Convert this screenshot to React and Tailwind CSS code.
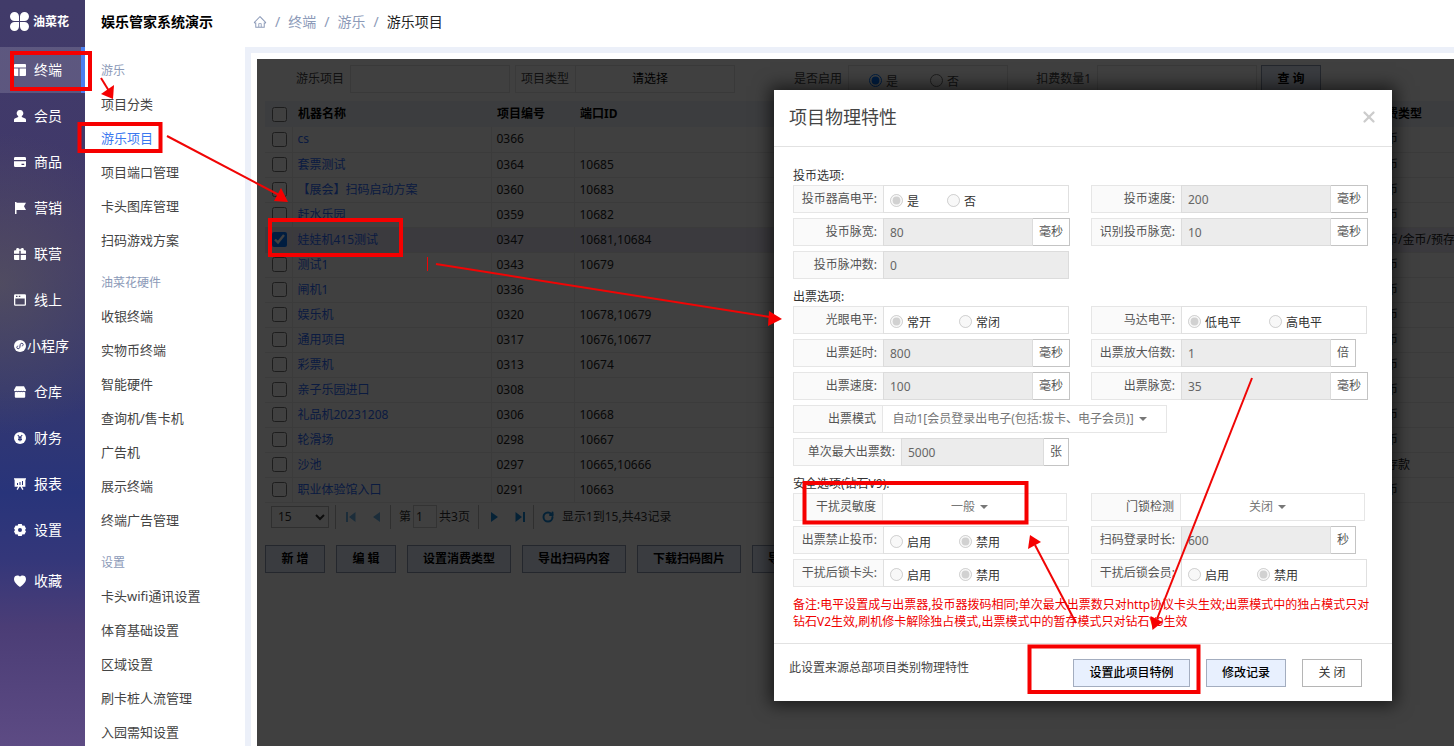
import React from 'react';
import clsx from 'clsx';
import { X, RotateCw } from 'lucide-react';
import { AiOutlineHome } from 'react-icons/ai';

const navItems = [
  { label: '终端', icon: 'terminal', active: true },
  { label: '会员', icon: 'member' },
  { label: '商品', icon: 'card' },
  { label: '营销', icon: 'flag' },
  { label: '联营', icon: 'gift' },
  { label: '线上', icon: 'window' },
  { label: '小程序', icon: 'mini' },
  { label: '仓库', icon: 'store' },
  { label: '财务', icon: 'yen' },
  { label: '报表', icon: 'board' },
  { label: '设置', icon: 'gear' },
];

const menuGroups = [
  { title: '游乐', items: ['项目分类', '游乐项目', '项目端口管理', '卡头图库管理', '扫码游戏方案'] },
  {
    title: '油菜花硬件',
    items: ['收银终端', '实物币终端', '智能硬件', '查询机/售卡机', '广告机', '展示终端', '终端广告管理'],
  },
  { title: '设置', items: ['卡头wifi通讯设置', '体育基础设置', '区域设置', '刷卡桩人流管理', '入园需知设置'] },
];

const machines = [
  { name: 'cs', code: '0366', ports: '', type: '代币' },
  { name: '套票测试', code: '0364', ports: '10685', type: '代币' },
  { name: '【展会】扫码启动方案', code: '0360', ports: '10683', type: '代币' },
  { name: '赶水乐园', code: '0359', ports: '10682', type: '代币' },
  { name: '娃娃机415测试', code: '0347', ports: '10681,10684', type: '代币/金币/预存款', checked: true },
  { name: '测试1', code: '0343', ports: '10679', type: '代币' },
  { name: '闸机1', code: '0336', ports: '', type: '代币' },
  { name: '娱乐机', code: '0320', ports: '10678,10679', type: '代币' },
  { name: '通用项目', code: '0317', ports: '10676,10677', type: '代币' },
  { name: '彩票机', code: '0313', ports: '10674', type: '代币' },
  { name: '亲子乐园进口', code: '0308', ports: '', type: '代币' },
  { name: '礼品机20231208', code: '0306', ports: '10668', type: '代币' },
  { name: '轮滑场', code: '0298', ports: '10667', type: '代币' },
  { name: '沙池', code: '0297', ports: '10665,10666', type: '预存款' },
  { name: '职业体验馆入口', code: '0291', ports: '10663', type: '代币' },
];

const NavIcon = ({ name }) => {
  const shapes = {
    terminal: <path d="M1 0h10a1 1 0 0 1 1 1v2.400H0V1a1 1 0 0 1 1-1zM0 4.600h4.300V12H1a1 1 0 0 1-1-1zM5.600 4.600H12V11a1 1 0 0 1-1 1H5.600z" />,
    member: <path d="M6 0a3.200 3.200 0 0 1 1.800 5.900v1.200l3.400 1.400c.6.300.8.800.8 1.400V12H0V9.900c0-.6.2-1.100.8-1.400l3.400-1.400V5.900A3.200 3.200 0 0 1 6 0z" />,
    card: <path fillRule="evenodd" d="M1.300 1h9.400A1.300 1.300 0 0 1 12 2.300V4H0V2.300A1.300 1.300 0 0 1 1.300 1zM0 5.200h12v4.500a1.300 1.300 0 0 1-1.300 1.300H1.300A1.300 1.300 0 0 1 0 9.700zM7.500 7.700v1.200h2.700V7.700z" />,
    flag: <path d="M1 0h1.500v.8H12L10 4.300l2 3.700H2.500v4H1z" />,
    gift: <path d="M3.600 0C4.800 0 5.600.9 6 1.800 6.400.9 7.200 0 8.400 0c1.300 0 1.800 1.300 1.200 2.300H11a1 1 0 0 1 1 1v2.500H6.700V2.800H5.300v3H0V3.300a1 1 0 0 1 1-1h1.400C1.800 1.300 2.300 0 3.600 0zM0 7h5.300v5H1a1 1 0 0 1-1-1zM6.700 7H12v4a1 1 0 0 1-1 1H6.700z" />,
    window: <path fillRule="evenodd" d="M1.200.3h9.600A1.200 1.200 0 0 1 12 1.500v9a1.200 1.200 0 0 1-1.200 1.200H1.200A1.200 1.200 0 0 1 0 10.500v-9A1.200 1.200 0 0 1 1.200.3zM1.300 4.500v5.900h9.400V4.500zM2 1.800v1.100h1.500V1.800zM4.800 1.800v1.100h1.500V1.800z" />,
    store: <path d="M2 .3h8L12 4c0 .8-.5 1.300-1.200 1.300-.5 0-.9-.2-1.200-.5-.7.6-1.700.6-2.400 0-.7.6-1.700.6-2.400 0-.7.6-1.700.6-2.400 0-.3.3-.7.500-1.200.5C.5 5.300 0 4.800 0 4zM.8 6.200c.8 0 1.300-.2 1.600-.4.8.5 1.700.5 2.400 0 .8.500 1.700.5 2.400 0 .8.500 1.700.5 2.400 0 .3.2.8.4 1.600.4v4.500a1 1 0 0 1-1 1H1.800a1 1 0 0 1-1-1z" />,
    gear: <path fillRule="evenodd" d="M4.300 0h3.400l.8 1.700 1.900-.1L12 4.500 11 6l1 1.500-1.600 2.900-1.900-.1-.8 1.700H4.300l-.8-1.700-1.900.1L0 7.500 1 6 0 4.500l1.600-2.900 1.900.1zM6 4a2 2 0 1 0 0 4 2 2 0 0 0 0-4z" />,
    heart: <path d="M6 1.600C7.300-.3 12-.3 12 3.900 12 7.300 8.600 10 6 12 3.400 10 0 7.300 0 3.900 0-.3 4.700-.3 6 1.600z" />,
  };
  return (
    <svg viewBox="0 0 12 12" className="size-3 shrink-0" fill="#fff">
      {shapes[name]}
      {name === 'mini' && (
        <>
          <circle cx="6" cy="6" r="6" />
          <path
            d="M6.200 4.600c.2-1.700 3-1.800 3 0 0 1-1 1.400-1.400 1.400M5.800 7.400c-.2 1.700-3 1.800-3 0 0-1 1-1.400 1.400-1.400M6.200 4.600 5.800 7.400"
            fill="none"
            stroke="#37386f"
          />
        </>
      )}
      {name === 'yen' && (
        <>
          <circle cx="6" cy="6" r="6" />
          <path d="M3.800 3 6 5.600 8.200 3M6 5.600V9.300M4 6h4M4 7.600h4" fill="none" stroke="#2c357a" strokeWidth="1.100" />
        </>
      )}
      {name === 'board' && (
        <>
          <path d="M0 .3h12v1.200h-.6v7.200H8l1.500 2.600-1.200.7L6.500 8.700h-1L3.700 12l-1.200-.7L4 8.700H.6V1.500H0z" />
          <path d="M3.500 5v2M6 4v3M8.500 3v4" stroke="#28347a" />
        </>
      )}
    </svg>
  );
};

const NavItem = ({ item }) => (
  <a
    href="#"
    className={clsx(
      'flex h-[46px] shrink-0 items-center border-r-4 pl-3.5 text-sm text-white',
      item.active ? 'border-[#4a7ff0] bg-white/15' : 'border-transparent'
    )}
  >
    <NavIcon name={item.icon} />
    <span className="w-11 text-center whitespace-nowrap">{item.label}</span>
  </a>
);

const SideNav = () => (
  <nav className="flex w-[85px] shrink-0 flex-col overflow-hidden bg-[radial-gradient(circle_at_0%_38%,rgba(96,92,88,0.55),transparent_32%),linear-gradient(to_bottom,#413b69_0%,#40386a_32%,#353870_52%,#28347a_66%,#34377a_75%,#4b3d76_84%,#5d4b84_100%)]">
    <div className="flex h-[47px] shrink-0 items-center gap-1 pb-1 pl-2.5 text-white">
      <svg viewBox="0 0 19 19" className="size-[19px] shrink-0" fill="#fff">
        <path d="M4.500 0A4.500 4.500 0 0 1 9 4.500V9H4.500a4.500 4.500 0 0 1 0-9zM14.500 0a4.500 4.500 0 0 1 0 9H10V4.500A4.500 4.500 0 0 1 14.500 0zM4.500 10H9v4.500A4.500 4.500 0 1 1 4.500 10zM10 10h4.500a4.500 4.500 0 1 1-4.500 4.500z" />
      </svg>
      <span className="text-xs font-bold whitespace-nowrap">油菜花</span>
    </div>
    {navItems.map((item) => (
      <NavItem key={item.label} item={item} />
    ))}
    <div className="mt-[5px]">
      <NavItem item={{ label: '收藏', icon: 'heart' }} />
    </div>
  </nav>
);

const SubMenu = () => (
  <aside className="w-40 shrink-0 overflow-hidden bg-white pl-4">
    <h1 className="flex h-[47px] items-center pb-1 text-sm font-bold whitespace-nowrap text-black">娱乐管家系统演示</h1>
    <div className="space-y-2.5 pt-2">
      {menuGroups.map((group) => (
        <div key={group.title}>
          <h2 className="text-xs leading-8 text-[#8c9ab8]">{group.title}</h2>
          <ul>
            {group.items.map((item) => (
              <li key={item}>
                <a
                  href="#"
                  className={clsx(
                    'block text-[13px] leading-[34px] whitespace-nowrap',
                    item === '游乐项目' ? 'text-[#3b78f0]' : 'text-[#444]'
                  )}
                >
                  {item}
                </a>
              </li>
            ))}
          </ul>
        </div>
      ))}
    </div>
  </aside>
);

const Breadcrumb = () => (
  <div className="flex h-[47px] shrink-0 items-center gap-2 pb-1 pl-2 text-sm text-[#8c9ab8]">
    <AiOutlineHome className="size-3.5" />
    <span>/</span>
    <a href="#">终端</a>
    <span>/</span>
    <a href="#">游乐</a>
    <span>/</span>
    <span className="text-[#222]">游乐项目</span>
  </div>
);

const FilterBar = () => (
  <form className="flex h-7 items-center text-[#444]">
    <label htmlFor="f-name" className="w-[93px] shrink-0 pr-1.5 text-right">游乐项目</label>
    <input id="f-name" className="h-7 w-40 shrink-0 border border-[#e2e2e2]" />
    <label htmlFor="f-type" className="ml-[5px] flex h-7 w-[60px] shrink-0 items-center justify-end border border-r-0 border-[#e8e8e8] pr-1.5">
      项目类型
    </label>
    <select id="f-type" className="h-7 w-40 shrink-0 appearance-none border border-[#e2e2e2] pr-2.5 text-center text-black">
      <option>请选择</option>
    </select>
    <span className="w-[113px] shrink-0 pr-1.5 text-right">是否启用</span>
    <div className="flex h-7 w-40 shrink-0 items-center gap-8 border border-[#e2e2e2] pt-1.5 pl-5">
      <label className="flex items-center gap-1">
        <input type="radio" name="enabled" defaultChecked className="mb-1" />是
      </label>
      <label className="flex items-center gap-1">
        <input type="radio" name="enabled" className="mb-1" />否
      </label>
    </div>
    <label htmlFor="f-qty" className="w-[89px] shrink-0 pr-1.5 text-right">扣费数量1</label>
    <input id="f-qty" className="h-7 w-40 shrink-0 border border-[#e2e2e2]" />
    <button type="button" className="ml-1 h-7 w-[60px] shrink-0 border border-[#8e9bb5] bg-[#e8f0fe] font-bold text-black">
      查 询
    </button>
  </form>
);

const MachineTable = () => (
  <table className="w-full table-fixed text-left whitespace-nowrap text-[#222]">
    <colgroup>
      <col className="w-[27px]" />
      <col className="w-[199px]" />
      <col className="w-[83px]" />
      <col className="w-[187px]" />
      <col />
      <col className="w-[86px]" />
    </colgroup>
    <thead>
      <tr className="h-[26px] bg-[#eef3fb] text-black">
        <th className="p-0 pl-[7px]">
          <input type="checkbox" aria-label="全选" className="block size-[15px]" />
        </th>
        <th className="p-0 pl-1.5">机器名称</th>
        <th className="p-0 pl-1.5">项目编号</th>
        <th className="p-0 pl-1.5">端口ID</th>
        <th />
        <th className="p-0 pl-1.5">消费类型</th>
      </tr>
    </thead>
    <tbody>
      {machines.map((m) => (
        <tr key={m.code} className={clsx('h-[25px] border-b border-[#ececec]', m.checked && 'bg-[#e9e8f8]')}>
          <td className="p-0 pl-[7px]">
            <input type="checkbox" aria-label={m.name} defaultChecked={m.checked} className="block size-[15px]" />
          </td>
          <td className="border-l border-[#ececec] p-0 pl-[5px]">
            <a href="#" className="text-[#2d6bff]">{m.name}</a>
          </td>
          <td className="border-l border-[#ececec] p-0 pl-[5px]">{m.code}</td>
          <td className="border-l border-[#ececec] p-0 pl-[5px]">{m.ports}</td>
          <td />
          <td className="p-0 pl-1.5">{m.type}</td>
        </tr>
      ))}
    </tbody>
  </table>
);

const Divider = () => <span className="h-6 w-px shrink-0 bg-[#bbb]" />;

const Pager = () => (
  <div className="flex h-7 items-center pl-1.5 text-[#333]">
    <select aria-label="每页条数" className="h-[22px] w-[58px] border border-[#bbb] pl-0.5">
      <option>15</option>
    </select>
    <div className="flex items-center gap-2 pl-1.5">
      <Divider />
      <button type="button" aria-label="首页" className="pl-0.5">
        <svg viewBox="0 0 10 10" className="size-2.5" fill="#6fb4e6"><path d="M0 0h2v10H0zM9.500 0v10L3 5z" /></svg>
      </button>
      <button type="button" aria-label="上一页" className="pl-2">
        <svg viewBox="0 0 10 10" className="size-2.5" fill="#6fb4e6"><path d="M8 0v10L1 5z" /></svg>
      </button>
      <Divider />
      <label className="flex items-center gap-0.5">
        第
        <input defaultValue="1" className="h-[23px] w-6 border border-[#ccc] pl-0.5" />
        共3页
      </label>
      <Divider />
      <button type="button" aria-label="下一页" className="pl-0.5">
        <svg viewBox="0 0 10 10" className="size-2.5" fill="#1787d8"><path d="M2 0v10l7-5z" /></svg>
      </button>
      <button type="button" aria-label="末页" className="pl-2">
        <svg viewBox="0 0 10 10" className="size-2.5" fill="#1787d8"><path d="M8 0h2v10H8zM.5 0v10L7 5z" /></svg>
      </button>
      <Divider />
      <RotateCw size={12} strokeWidth={4} color="#1787d8" />
      <span className="whitespace-nowrap">显示1到15,共43记录</span>
    </div>
  </div>
);

const ListPage = () => (
  <div className="min-w-0 pt-1.5 text-xs">
    <FilterBar />
    <div className="pt-2 pl-2">
      <MachineTable />
      <Pager />
      <div className="flex gap-[11px] pt-3.5">
        {['新 增', '编 辑', '设置消费类型', '导出扫码内容', '下载扫码图片', '导入游乐项目'].map((text) => (
          <button
            key={text}
            type="button"
            className={clsx(
              'h-7 shrink-0 border border-[#8e9bb5] bg-[#e8f0fe] font-bold text-black',
              text.length > 3 ? 'w-[104px]' : 'w-[60px]'
            )}
          >
            {text}
          </button>
        ))}
      </div>
    </div>
  </div>
);

const FieldLabel = ({ htmlFor, width = 'w-[90px]', children }) => {
  const Tag = htmlFor ? 'label' : 'span';
  return (
    <Tag
      htmlFor={htmlFor}
      className={clsx(
        'flex h-7 shrink-0 items-center justify-end border border-r-0 border-[#e6e6e6] bg-[#fafafa] pr-1.5',
        width
      )}
    >
      {children}
    </Tag>
  );
};

const InputField = ({ id, label, value, unit, wide }) => (
  <div className="flex">
    <FieldLabel htmlFor={id} width={wide ? 'w-[108px]' : 'w-[90px]'}>{label}:</FieldLabel>
    <input
      id={id}
      disabled
      defaultValue={value}
      className={clsx(
        'h-7 border border-[#dcdcdc] bg-[#ececec] pl-1.5 text-[#666]',
        wide ? 'w-[143px]' : unit ? 'w-[150px]' : 'w-[186px]'
      )}
    />
    {unit && <span className="flex h-7 items-center border border-l-0 border-[#c4c4c4] px-1.5">{unit}</span>}
  </div>
);

const RadioField = ({ name, label, options, checked = 0 }) => (
  <fieldset className="flex">
    <FieldLabel>{label}:</FieldLabel>
    <div className="flex h-7 w-[186px] items-center gap-7 border border-[#e0e0e0] pt-1.5 pl-1.5 text-[#333]">
      {options.map((option, index) => (
        <label key={option} className="flex items-center gap-1">
          <input type="radio" name={name} disabled defaultChecked={index === checked} className="mb-1 size-[13px]" />
          {option}
        </label>
      ))}
    </div>
  </fieldset>
);

const SelectField = ({ id, label, value, wide }) => (
  <div className="flex">
    <FieldLabel htmlFor={id} width="w-[89px]">{label}</FieldLabel>
    <div
      className={clsx(
        'flex h-7 items-center justify-center gap-[5px] border border-[#e6e6e6] pr-2.5 text-[#777]',
        wide ? 'w-[285px]' : 'w-[185px]'
      )}
    >
      <select id={id} className="field-sizing-content appearance-none">
        <option>{value}</option>
      </select>
      <svg viewBox="0 0 8 4" className="h-1 w-2" fill="#777"><path d="M0 0h8L4 4z" /></svg>
    </div>
  </div>
);

const SectionTitle = ({ children }) => <h4 className="flex h-[27px] items-end leading-[18px] text-[#333]">{children}</h4>;

const Row = ({ children }) => <div className="grid grid-cols-[298px_1fr]">{children}</div>;

const Dialog = () => (
  <section
    role="dialog"
    aria-label="项目物理特性"
    className="absolute top-[31px] left-[517px] w-[618px] bg-white text-xs text-[#555] shadow-[0_0_16px_4px_rgba(0,0,0,0.6)]"
  >
    <header className="flex h-[57px] items-center justify-between border-b border-[#e2e2e2] pr-3.5 pb-0.5 pl-[15px]">
      <h3 className="text-lg text-[#444]">项目物理特性</h3>
      <button type="button" aria-label="关闭">
        <X size={18} strokeWidth={3} color="#ccc" />
      </button>
    </header>

    <div className="px-[19px] pt-[11px] pb-[13px]">
      <SectionTitle>投币选项:</SectionTitle>
      <div className="space-y-[5px]">
        <Row>
          <RadioField name="coin-level" label="投币器高电平" options={['是', '否']} />
          <InputField id="coin-speed" label="投币速度" value="200" unit="毫秒" />
        </Row>
        <Row>
          <InputField id="coin-pulse" label="投币脉宽" value="80" unit="毫秒" />
          <InputField id="coin-detect" label="识别投币脉宽" value="10" unit="毫秒" />
        </Row>
        <InputField id="coin-count" label="投币脉冲数" value="0" />
      </div>

      <SectionTitle>出票选项:</SectionTitle>
      <div className="space-y-[5px]">
        <Row>
          <RadioField name="eye-level" label="光眼电平" options={['常开', '常闭']} />
          <RadioField name="motor-level" label="马达电平" options={['低电平', '高电平']} />
        </Row>
        <Row>
          <InputField id="ticket-delay" label="出票延时" value="800" unit="毫秒" />
          <InputField id="ticket-times" label="出票放大倍数" value="1" unit="倍" />
        </Row>
        <Row>
          <InputField id="ticket-speed" label="出票速度" value="100" unit="毫秒" />
          <InputField id="ticket-pulse" label="出票脉宽" value="35" unit="毫秒" />
        </Row>
        <SelectField id="ticket-mode" label="出票模式" value="自动1[会员登录出电子(包括:拔卡、电子会员)]" wide />
        <InputField id="ticket-max" label="单次最大出票数" value="5000" unit="张" wide />
      </div>

      <SectionTitle>安全选项(钻石V9):</SectionTitle>
      <div className="space-y-[5px]">
        <Row>
          <SelectField id="sensitivity" label="干扰灵敏度" value="一般" />
          <SelectField id="door-lock" label="门锁检测" value="关闭" />
        </Row>
        <Row>
          <RadioField name="forbid-coin" label="出票禁止投币" options={['启用', '禁用']} checked={1} />
          <InputField id="scan-time" label="扫码登录时长" value="600" unit="秒" />
        </Row>
        <Row>
          <RadioField name="lock-head" label="干扰后锁卡头" options={['启用', '禁用']} checked={1} />
          <RadioField name="lock-member" label="干扰后锁会员" options={['启用', '禁用']} checked={1} />
        </Row>
      </div>

      <p className="pt-[9px] leading-[17px] text-[#f00000]">
        备注:电平设置成与出票器,投币器拨码相同;单次最大出票数只对http协议卡头生效;出票模式中的独占模式只对
        <br />
        钻石V2生效,刷机修卡解除独占模式,出票模式中的暂存模式只对钻石V9生效
      </p>
    </div>

    <footer className="flex h-[58px] items-center border-t border-[#e2e2e2] pr-[30px] pl-[15px]">
      <span className="grow pb-2.5 text-[#444]">此设置来源总部项目类别物理特性</span>
      <div className="flex gap-4">
        <button type="button" className="h-7 w-[117px] border border-[#a3adbf] bg-[#e8f0fe] font-medium text-black">
          设置此项目特例
        </button>
        <button type="button" className="h-7 w-20 border border-[#a3adbf] bg-[#e8f0fe] font-medium text-black">
          修改记录
        </button>
        <button type="button" className="h-7 w-[60px] border border-[#b5b5b5] bg-white text-[#333]">关 闭</button>
      </div>
    </footer>
  </section>
);

// hand drawn guide marks on top of the page
const GuideMarks = () => (
  <svg className="pointer-events-none absolute top-0 left-0" width="1454" height="746" viewBox="0 0 1454 746">
    <g fill="none" stroke="#f60000" strokeWidth="4">
      <rect x="12" y="53" width="78" height="36" />
      <rect x="79.500" y="124" width="81" height="27" />
      <rect x="270" y="220" width="131" height="35" />
      <rect x="804.500" y="483" width="222" height="39.500" />
      <rect x="1029.500" y="646.500" width="169" height="45.500" />
    </g>
    <g stroke="#f00505" strokeWidth="2">
      <path d="M101 78l8 13" />
      <path d="M167 136l112 59" />
      <path d="M427.500 257v14" strokeWidth="1" />
      <path d="M436 264l334 53" />
      <path d="M1252 378l-95 241" />
      <path d="M1076 623l-41-78" />
    </g>
    <g fill="#f60000">
      <path d="M101 94l13-9-1 14z" />
      <path d="M288 202l-14-1 7-13z" />
      <path d="M782 319l-13-8-1 15z" />
      <path d="M1152.500 630l-2-14 12 6z" />
      <path d="M1030 535l-2 14 13-7z" />
    </g>
  </svg>
);

const App = () => {
  return (
    <div className="relative flex h-screen overflow-hidden bg-white font-['Noto_Sans','Noto_Sans_CJK_SC',sans-serif]">
      <SideNav />
      <SubMenu />
      <main className="flex min-w-0 grow flex-col">
        <Breadcrumb />
        <div className="flex min-h-0 grow border-t-6 border-l-6 border-[#ecf0f9] pt-1.5 pl-1.5">
          <div className="relative min-w-0 grow overflow-hidden bg-white">
            <ListPage />
            <div className="absolute inset-0 bg-black/75" />
            <Dialog />
          </div>
        </div>
      </main>
      <GuideMarks />
    </div>
  );
};

export default App;
